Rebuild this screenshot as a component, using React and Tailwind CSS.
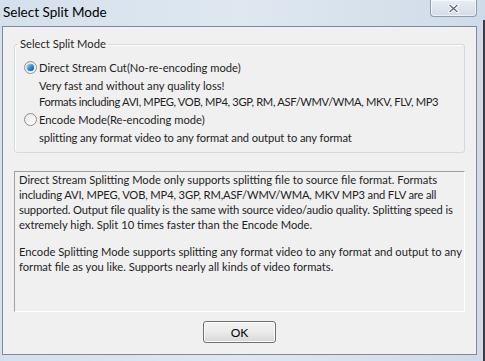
import React, { useState } from 'react';

const font = { fontFamily: 'Lato, "Open Sans", Arial, sans-serif' };

const Radio = ({ checked, onClick }) => (
  <span
    onClick={onClick}
    className="relative inline-flex h-[13px] w-[13px] shrink-0 items-center justify-center rounded-full border border-[#8f8f8f] bg-gradient-to-br from-[#e6e6e6] to-[#ffffff]"
  >
    {checked && (
      <span className="h-[7px] w-[7px] rounded-full bg-gradient-to-br from-[#9ed6f7] via-[#2b8ed8] to-[#0d4f9e] shadow-[0_0_1px_#0a4a8f]" />
    )}
  </span>
);

const App = () => {
  const [mode, setMode] = useState('direct');

  return (
    <div
      className="relative flex h-[361px] w-[485px] flex-col overflow-hidden bg-gradient-to-r from-[#d4e0ec] via-[#dfe8f1] to-[#cfdbe8]"
      style={font}
    >
      {/* title bar */}
      <div className="flex h-[26px] shrink-0 items-start">
        <span className="pl-[3px] pt-[3px] text-[13.5px] leading-[18px] text-black">Select Split Mode</span>
        <button className="ml-[auto] mr-[8px] flex h-[17px] w-[47px] items-center justify-center rounded-b-[4px] border border-t-0 border-[#8e9bab] bg-gradient-to-b from-[#e9eef4] to-[#d3dce7] shadow-[inset_0_0_0_1px_rgba(255,255,255,0.6)]">
          <svg width="11" height="9" viewBox="0 0 11 9">
            <path d="M1.5 1 L9.5 8 M9.5 1 L1.5 8" stroke="#ffffff" strokeWidth="3.2" strokeLinecap="square" />
            <path d="M1.5 1 L9.5 8 M9.5 1 L1.5 8" stroke="#5b6775" strokeWidth="1.2" />
          </svg>
        </button>
      </div>

      {/* client area */}
      <div className="ml-[2px] flex h-[329px] w-[475px] flex-col border border-[#7d8a99] bg-[#f0f0f0] px-[11px] text-[11.2px] leading-[15px] text-[#1e1e1e] whitespace-nowrap">
        <fieldset className="mt-[10px] h-[116px] rounded-[3px] border border-[#d5d8dc] px-[9px] pt-[9px] shadow-[inset_1px_1px_0_#ffffff]">
          <legend className="ml-[-6px] px-[2px] leading-[14px]">Select Split Mode</legend>
          <div className="flex items-center gap-[2px]">
            <Radio checked={mode === 'direct'} onClick={() => setMode('direct')} />
            <span>Direct Stream Cut(No-re-encoding mode)</span>
          </div>
          <div className="mt-[3px] pl-[15px]">Very fast and without any quality loss!</div>
          <div className="mt-[1px] pl-[15px] tracking-[-0.35px]">Formats including AVI, MPEG, VOB, MP4, 3GP, RM, ASF/WMV/WMA, MKV, FLV, MP3</div>
          <div className="mt-[3px] flex items-center gap-[2px]">
            <Radio checked={mode === 'encode'} onClick={() => setMode('encode')} />
            <span>Encode Mode(Re-encoding mode)</span>
          </div>
          <div className="mt-[3px] pl-[15px] tracking-[-0.1px]">splitting any format video to any format and output to any format</div>
        </fieldset>

        <div className="mt-[18px] h-[141px] border border-t-[#a0a0a0] border-l-[#a0a0a0] border-r-white border-b-white px-[4px] pt-0">
          <p>
            Direct Stream Splitting Mode only supports splitting file to source file format. Formats
            <br />
            <span className="tracking-[-0.15px]">including AVI, MPEG, VOB, MP4, 3GP, RM,ASF/WMV/WMA, MKV MP3 and FLV are all</span>
            <br />
            <span className="tracking-[-0.15px]">supported. Output file quality is the same with source video/audio quality. Splitting speed is</span>
            <br />
            extremely high. Split 10 times faster than the Encode Mode.
          </p>
          <p className="mt-[12px]">
            Encode Splitting Mode supports splitting any format video to any format and output to any
            <br />
            format file as you like. Supports nearly all kinds of video formats.
          </p>
        </div>

        <div className="flex justify-center pt-[9px]">
          <button className="h-[22px] w-[73px] rounded-[3px] border border-[#707070] bg-gradient-to-b from-[#f2f2f2] via-[#ebebeb] to-[#d7d7d7] text-[12px] text-black shadow-[inset_0_0_0_1px_#fcfcfc]">
            OK
          </button>
        </div>
      </div>

      {/* edge of window behind */}
      <div className="absolute right-0 top-[20px] h-[341px] w-[2px] bg-[#3c3c3c]" />
    </div>
  );
};

export default App;
